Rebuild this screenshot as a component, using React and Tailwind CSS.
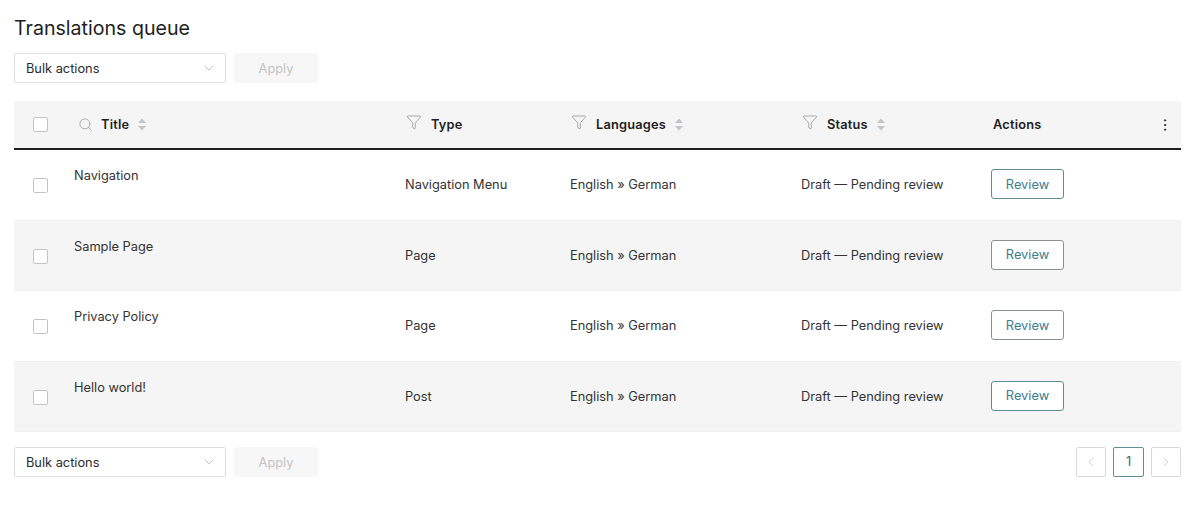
import { ChevronDown, ChevronLeft, ChevronRight, Search, Funnel, EllipsisVertical } from 'lucide-react'

const rows = [
  { title: 'Navigation', type: 'Navigation Menu', border: 'border-[#5f8c99]' },
  { title: 'Sample Page', type: 'Page', border: 'border-[#8a8f94]' },
  { title: 'Privacy Policy', type: 'Page', border: 'border-[#8a8f94]' },
  { title: 'Hello world!', type: 'Post', border: 'border-[#5f8c99]' },
]

function SortIcon() {
  return (
    <svg width="8" height="13" viewBox="0 0 8 13" className="ml-[9px] shrink-0">
      <path d="M4 0.5 L8 5 H0 Z" fill="#c3c4c7" />
      <path d="M4 12.5 L8 8 H0 Z" fill="#c3c4c7" />
    </svg>
  )
}

function Checkbox() {
  return <span className="block w-[15px] h-[15px] border border-[#c4c4c4] rounded-[2px] bg-white" />
}

function BulkBar() {
  return (
    <div className="flex gap-2 items-center">
      <div className="w-[212px] h-[30px] border border-[#dedede] rounded-[2px] bg-white flex items-center justify-between pl-[11px] pr-[8px] text-[12.8px] text-[#2b2b2b]">
        <span className="pt-[1px]">Bulk actions</span>
        <ChevronDown size={16} strokeWidth={0.8} color="#8f8f8f" />
      </div>
      <div className="w-[84px] h-[30px] rounded-[2px] bg-[#f7f7f7] flex items-center justify-center pt-[1px] text-[12.8px] text-[#c4c4c4]">
        Apply
      </div>
    </div>
  )
}

function HeaderCell({ filter, sort, label, className }) {
  return (
    <div className={`flex items-center ${className}`}>
      {filter && <Funnel size={16} strokeWidth={0.9} color="#777" className="mr-[9px] -mt-[5px] -ml-[1px]" />}
      <span className="font-semibold tracking-[0.2px] text-[#1e1e1e]">{label}</span>
      {sort && <SortIcon />}
    </div>
  )
}

export default function App() {
  return (
    <div className="w-[1200px] h-[510px] bg-white pt-[14px] pl-[14px] pr-[19px] overflow-hidden font-['Inter',sans-serif] text-[12.8px] text-[#333]">
      <h1 className="text-[19.6px] leading-[28px] font-normal text-[#1e1e1e]">Translations queue</h1>
      <div className="mt-[11px]">
        <BulkBar />
      </div>

      <div className="mt-[18px] h-[49px] bg-[#f5f5f5] border-b-2 border-[#1e1e1e] grid grid-cols-[61px_331px_165px_231px_190px_1fr] items-center">
        <div className="pl-[19px]">
          <Checkbox />
        </div>
        <div className="flex items-center pl-[3px]">
          <Search size={15} strokeWidth={1.1} color="#8f8f8f" className="mr-[8px]" />
          <HeaderCell sort label="Title" />
        </div>
        <HeaderCell filter label="Type" className="pl-[1px]" />
        <HeaderCell filter sort label="Languages" className="pl-[1px]" />
        <HeaderCell filter sort label="Status" className="pl-[1px]" />
        <div className="flex items-center justify-between pr-[8px]">
          <span className="font-semibold tracking-[0.2px] text-[#1e1e1e] ml-[1px]">Actions</span>
          <EllipsisVertical size={16} strokeWidth={1.4} color="#1e1e1e" />
        </div>
      </div>

      {rows.map((row, i) => (
        <div
          key={row.title}
          className={`h-[70.5px] border-b border-[#f0f0f0] grid grid-cols-[60px_331px_165px_231px_190px_1fr] items-center ${i % 2 === 1 ? 'bg-[#f5f5f5]' : 'bg-white'}`}
        >
          <div className="pl-[19px] pt-[2px]">
            <Checkbox />
          </div>
          <div className="self-start pt-[16px]">{row.title}</div>
          <div>{row.type}</div>
          <div>English » German</div>
          <div>Draft — Pending review</div>
          <div className="-mt-[1px]">
            <span className={`flex items-center justify-center w-[73px] h-[30px] border ${row.border} rounded-[3px] bg-white text-[#3b7c8e]`}>
              Review
            </span>
          </div>
        </div>
      ))}

      <div className="mt-[15px] flex items-center justify-between">
        <BulkBar />
        <div className="flex gap-[7px]">
          <span className="w-[30px] h-[30px] border border-[#d9d9d9] rounded-[2px] flex items-center justify-center">
            <ChevronLeft size={16} strokeWidth={0.9} color="#bbb" />
          </span>
          <span className="w-[31px] h-[30px] border border-[#5f8c99] rounded-[2px] flex items-center justify-center text-[#2f6f80]">
            1
          </span>
          <span className="w-[30px] h-[30px] border border-[#d9d9d9] rounded-[2px] flex items-center justify-center">
            <ChevronRight size={16} strokeWidth={0.9} color="#bbb" />
          </span>
        </div>
      </div>
    </div>
  )
}
